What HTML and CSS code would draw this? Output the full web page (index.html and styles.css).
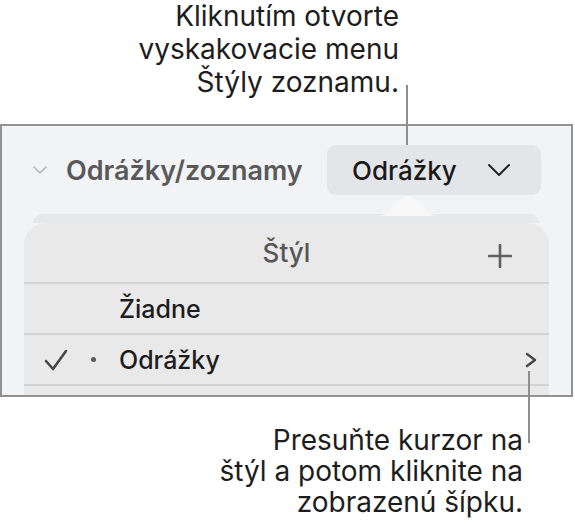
FILE: index.html
```html
<!DOCTYPE html>
<html lang="sk">
<head>
    <meta charset="UTF-8">
    <meta name="viewport" content="width=device-width, initial-scale=1.0">
    <title>Štýly zoznamu</title>
    <link rel="stylesheet" href="styles.css">
</head>
<body>
    <div class="page">
        <!-- Popis nad panelom -->
        <div class="callout callout-top">
            Kliknutím otvorte<br>
            vyskakovacie menu<br>
            Štýly zoznamu.
        </div>

        <div class="panel">
            <div class="section-head">
                <svg class="disclosure" width="16" height="10" viewBox="0 0 16 10">
                    <path d="M2 2 L8 8 L14 2" fill="none" stroke="#b4b5b8" stroke-width="1.6" stroke-linecap="round" stroke-linejoin="round"/>
                </svg>
                <span class="section-title">Odrážky/zoznamy</span>
                <button class="popup-btn">
                    <span>Odrážky</span>
                    <svg width="24" height="14" viewBox="0 0 24 14">
                        <path d="M2 2 L12 12 L22 2" fill="none" stroke="#262626" stroke-width="2" stroke-linecap="round" stroke-linejoin="round"/>
                    </svg>
                </button>
            </div>

            <div class="popover">
                <svg class="pointer" width="60" height="22" viewBox="0 0 60 22">
                    <path d="M0 22 C14 22 18 2 30 2 C42 2 46 22 60 22 Z" fill="#f8f8f9"/>
                </svg>
                <div class="menu-back"></div>
                <div class="menu">
                    <div class="menu-head">
                        <span class="menu-title">Štýl</span>
                        <svg class="plus" width="24" height="24" viewBox="0 0 24 24">
                            <path d="M12 1 V23 M1 12 H23" stroke="#5f5f5f" stroke-width="2.6" stroke-linecap="round"/>
                        </svg>
                    </div>
                    <div class="menu-row">
                        <span class="mark"></span>
                        <span class="bullet bullet-none"></span>
                        <span class="row-label">Žiadne</span>
                    </div>
                    <div class="menu-row">
                        <span class="mark">
                            <svg width="24" height="22" viewBox="0 0 24 22">
                                <path d="M2 12 L9 20 L22 2" fill="none" stroke="#474747" stroke-width="2.6" stroke-linecap="round" stroke-linejoin="round"/>
                            </svg>
                        </span>
                        <span class="bullet"></span>
                        <span class="row-label">Odrážky</span>
                        <svg class="row-arrow" width="12" height="16" viewBox="0 0 12 16">
                            <path d="M2 2 L10 8 L2 14" fill="none" stroke="#474747" stroke-width="2.4" stroke-linecap="round" stroke-linejoin="round"/>
                        </svg>
                    </div>
                    <div class="menu-row"></div>
                </div>
            </div>
        </div>

        <!-- Popis pod panelom -->
        <div class="callout callout-bottom">
            Presuňte kurzor na<br>
            štýl a potom kliknite na<br>
            zobrazenú šípku.
        </div>

        <div class="leader leader-top"></div>
        <div class="leader leader-bottom"></div>
    </div>
</body>
</html>
```

FILE: styles.css
```css
body {
    margin: 0;
    background: #fff;
    font-family: Inter, "Noto Sans", sans-serif;
    color: #1d1d1f;
}

.page {
    position: relative;
    width: 575px;
    height: 529px;
    overflow: hidden;
}

.callout {
    text-align: right;
    font-size: 28px;
    font-weight: 400;
    color: #1d1d1d;
}

.callout-top {
    height: 124px;
    line-height: 33px;
    padding-right: 176px;
    box-sizing: border-box;
}

.callout-bottom {
    line-height: 31px;
    padding-top: 28px;
    padding-right: 52px;
}

.panel {
    height: 273px;
    box-sizing: border-box;
    margin-right: 2px;
    border: 2px solid #929292;
    background: #f2f3f5;
    overflow: hidden;
    padding-top: 19px;
}

.section-head {
    display: flex;
    align-items: center;
    height: 50px;
}

.disclosure {
    margin-left: 30px;
    margin-right: 18px;
}

.section-title {
    font-size: 27px;
    font-weight: 600;
    color: #58595b;
    flex: 1;
}

.popup-btn {
    display: flex;
    align-items: center;
    justify-content: space-between;
    width: 214px;
    height: 50px;
    margin-right: 30px;
    padding: 0 30px 0 25px;
    box-sizing: border-box;
    border: none;
    border-radius: 9px;
    background: #e4e5e8;
    font-family: inherit;
    font-size: 26px;
    font-weight: 500;
    color: #1a1a1a;
}

.popover {
    position: relative;
    margin-top: 19px;
    padding: 0 22px;
}

.pointer {
    position: absolute;
    left: 376px;
    top: -20px;
}

.menu-back {
    height: 9px;
    margin: 0 10px 0 9px;
    border-radius: 12px 12px 0 0;
    background: #e7e8ea;
}

.menu {
    background: #e9e9e9;
    border-radius: 22px 22px 0 0;
}

.menu-head {
    display: flex;
    align-items: center;
    justify-content: center;
    position: relative;
    height: 59px;
    border-bottom: 2px solid #d3d3d3;
}

.menu-title {
    font-size: 26px;
    font-weight: 500;
    color: #575757;
}

.plus {
    position: absolute;
    right: 37px;
    top: 21px;
}

.menu-row {
    display: flex;
    align-items: center;
    height: 49px;
    border-bottom: 2px solid #d3d3d3;
}

.mark {
    width: 24px;
    margin-left: 20px;
    display: flex;
}

.bullet {
    width: 5px;
    height: 5px;
    margin-left: 23px;
    margin-right: 23px;
    border-radius: 50%;
    background: #5a5a5a;
}

.bullet-none {
    visibility: hidden;
}

.row-label {
    flex: 1;
    font-size: 25px;
    font-weight: 500;
    color: #1d1d1d;
}

.row-arrow {
    margin-right: 12px;
}

.leader {
    position: absolute;
    width: 2px;
    background: #8e8e8e;
}

.leader-top {
    left: 406px;
    top: 85px;
    height: 60px;
}

.leader-bottom {
    left: 528px;
    top: 371px;
    height: 72px;
}
```
